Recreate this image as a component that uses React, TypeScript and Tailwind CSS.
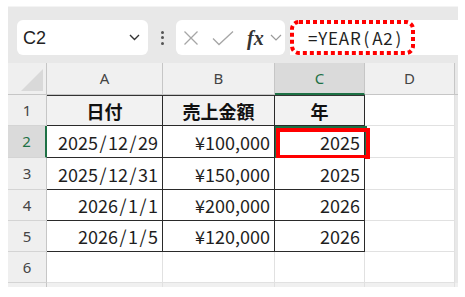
import React from "react";

const Num = ({ t }: { t: string }) => {
  const parts = t.split("/");
  return (
    <>
      {parts.map((p, i) => (
        <React.Fragment key={i}>
          {i > 0 && <span className="inline-block w-[10px] text-center">/</span>}
          {p}
        </React.Fragment>
      ))}
    </>
  );
};

const rows = [
  { n: "1", a: "日付", b: "売上金額", c: "年", head: true, h: "h-[31px]" },
  { n: "2", a: "2025/12/29", b: "¥100,000", c: "2025", h: "h-[32px]" },
  { n: "3", a: "2025/12/31", b: "¥150,000", c: "2025", h: "h-[32px]" },
  { n: "4", a: "2026/1/1", b: "¥200,000", c: "2026", h: "h-[31px]" },
  { n: "5", a: "2026/1/5", b: "¥120,000", c: "2026", h: "h-[31px]" },
];

export default function App() {
  return (
    <div className="w-[465px] h-[297px] bg-white pt-[6px] pl-[8px] overflow-hidden">
      <div className="w-[450px] h-[281px] bg-[#e8e8e8] flex flex-col border-t border-[#f4f4f4]">
        {/* toolbar */}
        <div className="h-[56px] flex items-start pt-[13px]">
          <div className="ml-[9px] w-[131px] h-[35px] rounded-[6px] bg-white flex items-center justify-between pl-[6px] pr-[8px]">
            <span className="font-['Liberation_Sans',sans-serif] text-[18px] leading-none text-[#222]">C2</span>
            <svg width="11" height="7" viewBox="0 0 11 7">
              <path d="M1 1 L5.5 5.5 L10 1" fill="none" stroke="#333" strokeWidth="1.4" />
            </svg>
          </div>
          <div className="w-[28px] h-[35px] flex flex-col items-center justify-center gap-[2.5px]">
            <div className="w-[3px] h-[3px] rounded-full bg-[#555]" />
            <div className="w-[3px] h-[3px] rounded-full bg-[#555]" />
            <div className="w-[3px] h-[3px] rounded-full bg-[#555]" />
          </div>
          <div className="w-[109px] h-[35px] rounded-[6px] bg-white flex items-center pl-[7px]">
            <svg width="16" height="16" viewBox="0 0 16 16">
              <path d="M1.5 1.5 L14.5 14.5 M14.5 1.5 L1.5 14.5" stroke="#a6a6a6" strokeWidth="1.3" fill="none" />
            </svg>
            <svg width="22" height="16" viewBox="0 0 22 16" className="ml-[13px]">
              <path d="M1 8.5 L7 14.5 L21 1.5" stroke="#a6a6a6" strokeWidth="1.3" fill="none" />
            </svg>
            <span className="ml-[13px] font-['Liberation_Serif',serif] italic text-[20px] leading-none text-[#333] font-semibold">fx</span>
            <svg width="12" height="7" viewBox="0 0 12 7" className="ml-[6px]">
              <path d="M1 1 L6 6 L11 1" fill="none" stroke="#9a9a9a" strokeWidth="1.2" />
            </svg>
          </div>
          <div className="ml-[5px] flex-1 h-[35px] bg-white relative flex items-center pl-[18px]">
            <span className="font-['Noto_Sans_CJK_JP',sans-serif] text-[17px] leading-none text-[#1f1f1f] tracking-[0.8px]">
              =YEAR<span className="inline-block mx-[2px]">(</span>A2<span className="inline-block mx-[2px]">)</span>
            </span>
            <svg width="125" height="35" viewBox="0 0 125 35" className="absolute left-0 top-0">
              <rect x="2" y="2" width="121" height="31" rx="7" fill="none" stroke="#ff0000" strokeWidth="4" strokeDasharray="4 3" />
            </svg>
          </div>
        </div>
        {/* grid */}
        <div className="flex flex-col bg-white font-['Noto_Sans',sans-serif]">
          {/* column header */}
          <div className="flex h-[32px] bg-[#e8e8e8]">
            <div className="w-[39px] h-full bg-[#efefef] border-r border-b border-[#c6c6c6] relative">
              <svg width="24" height="24" viewBox="0 0 24 24" className="absolute right-[2px] bottom-[2px]">
                <polygon points="23,1 23,23 1,23" fill="#d9d9d9" />
              </svg>
            </div>
            <div className="w-[116px] h-full bg-[#f0f0f0] border-r border-b border-[#c6c6c6] flex items-center justify-center text-[15px] text-[#444]">A</div>
            <div className="w-[112px] h-full bg-[#f0f0f0] border-r border-b border-[#c6c6c6] flex items-center justify-center text-[15px] text-[#444]">B</div>
            <div className="w-[90px] h-full bg-[#dadada] border-r border-[#c6c6c6] border-b-2 border-b-[#1e7145] flex items-center justify-center text-[15px] text-[#1e7145]">C</div>
            <div className="w-[90px] h-full bg-[#f0f0f0] border-r border-b border-[#c6c6c6] flex items-center justify-center text-[15px] text-[#444]">D</div>
            <div className="flex-1 h-full bg-[#e8e8e8] border-b border-[#c6c6c6]" />
          </div>
          {rows.map((r) => {
            const sel = r.n === "2";
            const cellText = r.head
              ? "font-['Noto_Sans_CJK_JP',sans-serif] font-bold text-[18px] text-[#111] justify-center"
              : "font-['Noto_Sans_CJK_JP',sans-serif] text-[18px] text-[#1f1f1f] justify-end pr-[4px]";
            const bg = r.head ? "bg-[#f2f2f2]" : "bg-white";
            const top = r.head ? "border-t border-t-[#333]" : "";
            return (
              <div key={r.n} className={`flex ${r.h}`}>
                <div
                  className={`w-[39px] h-full flex items-center justify-center text-[15px] border-b border-[#d4d4d4] ${
                    sel ? "bg-[#dadada] text-[#1e7145] border-r-2 border-r-[#1e7145]" : "bg-[#efefef] text-[#444] border-r border-r-[#c6c6c6]"
                  }`}
                >
                  {r.n}
                </div>
                <div className={`w-[116px] h-full flex items-center leading-none border-r border-b border-[#2a2a2a] ${bg} ${top} ${cellText}`}>
                  <Num t={r.a} />
                </div>
                <div className={`w-[112px] h-full flex items-center leading-none border-r border-b border-[#2a2a2a] ${bg} ${top} ${cellText}`}>
                  {r.b}
                </div>
                <div className={`w-[90px] h-full flex items-center leading-none border-r border-b border-[#2a2a2a] relative ${bg} ${top} ${cellText}`}>
                  {r.c}
                  {sel && (
                    <>
                      <div className="absolute left-0 top-0 w-[92px] h-[32px] border-2 border-[#1e7145]" />
                      <div className="absolute left-[1px] top-[2px] w-[94px] h-[31px] border-[4px] border-[#ff0000]" />
                    </>
                  )}
                </div>
                <div className="w-[90px] h-full border-r border-b border-[#e1e1e1]" />
                <div className="flex-1 h-full bg-[#e8e8e8]" />
              </div>
            );
          })}
          {/* row 6 */}
          <div className="flex h-[31px]">
            <div className="w-[39px] h-full flex items-center justify-center text-[15px] bg-[#efefef] text-[#444] border-r border-r-[#c6c6c6] border-b border-[#d4d4d4]">6</div>
            <div className="w-[116px] h-full border-r border-b border-[#e1e1e1]" />
            <div className="w-[112px] h-full border-r border-b border-[#e1e1e1]" />
            <div className="w-[90px] h-full border-r border-b border-[#e1e1e1]" />
            <div className="w-[90px] h-full border-r border-b border-[#e1e1e1]" />
            <div className="flex-1 h-full bg-[#e8e8e8]" />
          </div>
        </div>
        <div className="flex-1 bg-[#f0f0f0] flex">
          <div className="w-[39px] h-full border-r border-[#c6c6c6]" />
          <div className="w-[116px] h-full border-r border-[#e1e1e1]" />
          <div className="w-[112px] h-full border-r border-[#e1e1e1]" />
          <div className="w-[90px] h-full border-r border-[#e1e1e1]" />
          <div className="w-[90px] h-full border-r border-[#e1e1e1]" />
        </div>
      </div>
    </div>
  );
}
